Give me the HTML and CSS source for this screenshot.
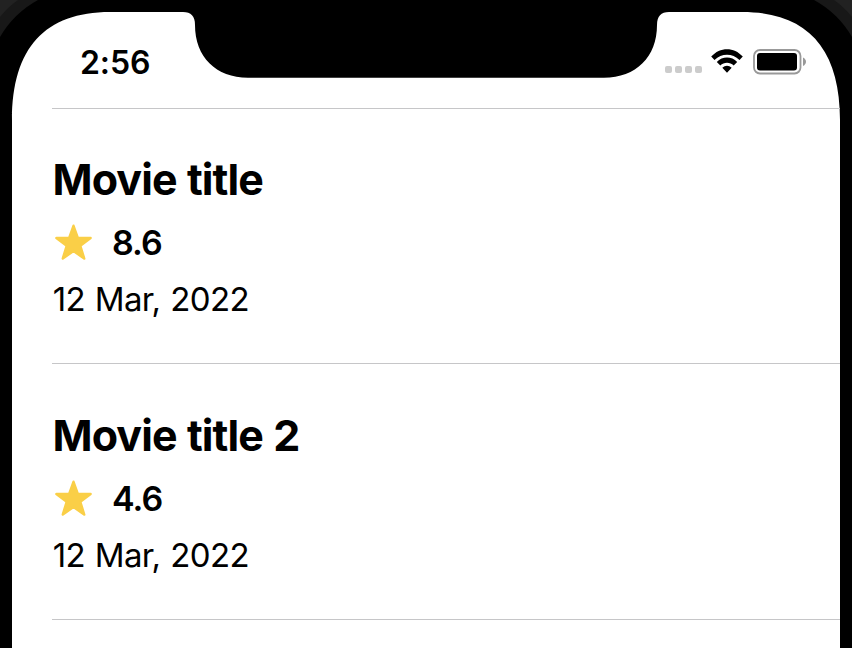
FILE: index.html
```html
<!DOCTYPE html>
<html lang="en">
<head>
<meta charset="utf-8">
<title>Movies</title>
<link rel="stylesheet" href="styles.css">
</head>
<body>
<div class="phone">
  <svg class="bezel" viewBox="0 0 852 648" aria-hidden="true">
    <rect width="852" height="648" fill="#222"/>
    <path fill="#181818" d="M0 648V17Q8 7 18 0H834Q844 7 852 17V648Z"/>
    <path fill="#000" d="M0 648V37Q14 13 38 0H814Q838 13 852 37V648Z"/>
    <path fill="#fff" d="M12 648V120C12 48 45 12 110 12H183C191 12 195 16 195 25C195 57 216 77.700 248 77.700H604C636 77.700 657 57 657 25C657 16 661 12 669 12H742C807 12 840 48 840 120V648Z"/>
  </svg>
  <header class="status">
    <time class="clock">2:56</time>
    <div class="indicators">
      <div class="signal"><i></i><i></i><i></i><i></i></div>
      <svg class="wifi" viewBox="0 0 32 24" aria-hidden="true">
        <path d="M.2 7.500C9-2.300 23-2.300 31.800 7.500L28.500 11C21.400 3.900 10.600 3.900 3.500 11ZM5.800 13C11.400 7.100 20.600 7.100 26.200 13L22.700 16.600C19 12.900 13 12.900 9.300 16.600ZM11.300 18.700C14.200 16 17.800 16 20.700 18.700L16 23.700Z"/>
      </svg>
      <svg class="battery" viewBox="0 0 54 26" aria-hidden="true">
        <rect x="1" y="1" width="46.500" height="23.500" rx="6" fill="none" stroke="#999" stroke-width="1.800"/>
        <rect x="4" y="4" width="40" height="17.500" rx="3"/>
        <path d="M50 8.500C54 10.500 54 15 50 17Z" fill="#999"/>
      </svg>
    </div>
  </header>
  <main class="movies">
    <article class="movie">
      <h2 class="title">Movie title</h2>
      <div class="rating">
        <svg class="star" viewBox="0 0 38 37" aria-hidden="true"><path d="M18.500 1.800L22.800 14H35.600L25.300 21.800L29.200 34.500L18.500 27L7.800 34.500L11.700 21.800L1.400 14H14.200Z"/></svg>
        <span class="score">8.6</span>
      </div>
      <p class="date">12 Mar, 2022</p>
    </article>
    <article class="movie">
      <h2 class="title">Movie title 2</h2>
      <div class="rating">
        <svg class="star" viewBox="0 0 38 37" aria-hidden="true"><path d="M18.500 1.800L22.800 14H35.600L25.300 21.800L29.200 34.500L18.500 27L7.800 34.500L11.700 21.800L1.400 14H14.200Z"/></svg>
        <span class="score">4.6</span>
      </div>
      <p class="date">12 Mar, 2022</p>
    </article>
  </main>
</div>
</body>
</html>
```
FILE: styles.css
```css
* { box-sizing: border-box; margin: 0; padding: 0; }
body { font-family: Inter, "Liberation Sans", sans-serif; color: #000; overflow: hidden; }
.phone { position: relative; width: 852px; height: 648px; overflow: hidden; }
.bezel { position: absolute; inset: 0; width: 852px; height: 648px; z-index: -1; }
.status { display: flex; justify-content: space-between; height: 108px; padding: 42px 45px 0 80px; }
.clock { font-size: 32px; font-weight: 600; line-height: 42px; height: 42px; letter-spacing: -0.1px; }
.indicators { display: flex; height: 40px; }
.signal { display: flex; gap: 3px; margin-top: 24px; margin-right: 9px; height: 7px; }
.signal i { width: 7px; height: 7px; border-radius: 2px; background: #ccc; }
.wifi { width: 32px; height: 24px; margin-top: 7px; margin-right: 10px; }
.battery { width: 54px; height: 26px; margin-top: 7px; }
.movies { margin: 0 12px 0 52px; border-bottom: 1px solid #c6c6c8; height: 512px; }
.movie { height: 256px; border-top: 1px solid #c6c6c8; padding-top: 43px; }
.movie + .movie { height: 255px; margin-top: -1px; padding-top: 44px; }
.title { font-size: 43px; font-weight: 700; line-height: 54px; height: 61px; letter-spacing: -0.9px; word-spacing: 1px; padding-left: 0.5px; }
.rating { display: flex; align-items: center; height: 58px; }
.star { width: 38px; height: 37px; margin: 0 19px 0 3px; fill: #facf47; stroke: #facf47; stroke-width: 2.500; stroke-linejoin: round; }
.score { font-size: 34px; font-weight: 600; line-height: 42px; letter-spacing: -1px; padding-top: 1px; }
.date { font-size: 33px; line-height: 42px; letter-spacing: -0.6px; word-spacing: 1px; margin-top: 7px; padding-left: 0.7px; }
```
